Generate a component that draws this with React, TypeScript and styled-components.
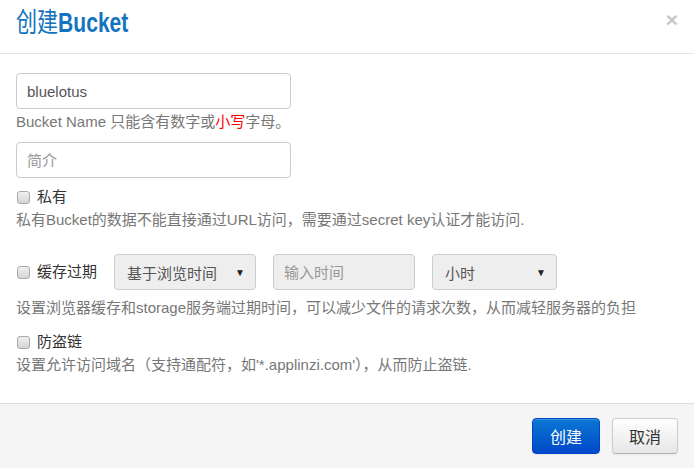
import styled, { createGlobalStyle } from 'styled-components';

const GlobalStyle = createGlobalStyle`
  html, body {
    margin: 0;
    padding: 0;
    background: #fff;
  }
  body {
    font-family: "Liberation Sans", Arial, "Noto Sans CJK SC", sans-serif;
    font-size: 14px;
    color: #333;
  }
`;

const App = () => {
  return (
    <Modal>
      <GlobalStyle />
      <Header>
        <Title>
          创建<strong>Bucket</strong>
        </Title>
        <Close>×</Close>
      </Header>
      <Body>
        <Field>
          <TextInput defaultValue="bluelotus" />
          <Help>
            Bucket Name 只能含有数字或<Red>小写</Red>字母。
          </Help>
        </Field>
        <Field>
          <TextInput placeholder="简介" />
        </Field>
        <Field $top={-1}>
          <CheckLabel>
            <Check type="checkbox" />
            私有
          </CheckLabel>
          <Help>私有Bucket的数据不能直接通过URL访问，需要通过secret key认证才能访问.</Help>
        </Field>
        <Field $top={14} $gap={8}>
          <Row>
            <CheckLabel $width={81}>
              <Check type="checkbox" />
              缓存过期
            </CheckLabel>
            <Select $width={142}>
              基于浏览时间
              <Caret>▼</Caret>
            </Select>
            <TimeInput placeholder="输入时间" disabled />
            <Select $width={125}>
              小时
              <Caret>▼</Caret>
            </Select>
          </Row>
          <Help>设置浏览器缓存和storage服务端过期时间，可以减少文件的请求次数，从而减轻服务器的负担</Help>
        </Field>
        <Field $top={4}>
          <CheckLabel>
            <Check type="checkbox" />
            防盗链
          </CheckLabel>
          <Help>设置允许访问域名（支持通配符，如'*.applinzi.com'），从而防止盗链.</Help>
        </Field>
      </Body>
      <Footer>
        <PrimaryButton>创建</PrimaryButton>
        <Button>取消</Button>
      </Footer>
    </Modal>
  );
};

const Modal = styled.div`
  width: 694px;
  height: 468px;
  display: flex;
  flex-direction: column;
  background: #fff;
  overflow: hidden;
`;

const Header = styled.div`
  height: 53px;
  flex-shrink: 0;
  display: flex;
  align-items: center;
  justify-content: space-between;
  padding: 0 16px;
  border-bottom: 1px solid #e5e5e5;
`;

const Title = styled.h3`
  margin: 0;
  font-size: 27px;
  font-weight: normal;
  color: #1273bf;
  line-height: 30px;
  padding-bottom: 8px;
  transform: scaleX(0.78);
  transform-origin: left center;

  strong {
    font-weight: bold;
  }
`;

const Close = styled.span`
  font-size: 21px;
  font-weight: bold;
  color: #c6c6c6;
  line-height: 20px;
  margin-bottom: 14px;
`;

const Body = styled.div`
  flex: 1;
  padding: 19px 16px 0;
  display: flex;
  flex-direction: column;
  gap: 10px;
`;

const Field = styled.div<{ $top?: number; $gap?: number }>`
  display: flex;
  flex-direction: column;
  gap: ${(p) => p.$gap ?? 3}px;
  margin-top: ${(p) => p.$top ?? 0}px;
`;

const Row = styled.div`
  display: flex;
  align-items: center;
  gap: 17px;
`;

const TextInput = styled.input`
  box-sizing: border-box;
  width: 275px;
  height: 36px;
  padding: 0 10px;
  border: 1px solid #ccc;
  border-radius: 4px;
  font: inherit;
  font-size: 15px;
  color: #555;
  outline: none;

  &::placeholder {
    color: #999;
  }
`;

const TimeInput = styled(TextInput)`
  width: 142px;
  background: #eee;
  cursor: not-allowed;
`;

const Help = styled.div`
  font-size: 15px;
  line-height: 20px;
  color: #777;
  white-space: nowrap;
`;

const Red = styled.span`
  color: #f00;
`;

const CheckLabel = styled.label<{ $width?: number }>`
  display: flex;
  align-items: center;
  gap: 7px;
  font-size: 15px;
  color: #333;
  line-height: 20px;
  width: ${(p) => (p.$width ? `${p.$width}px` : 'auto')};
  white-space: nowrap;
`;

const Check = styled.input`
  appearance: none;
  margin: 0 0 0 1px;
  width: 13px;
  height: 13px;
  border: 1px solid #aaa;
  border-radius: 3px;
  background: linear-gradient(#f0f0f0, #d4d4d4);
  box-sizing: border-box;
`;

const Select = styled.div<{ $width: number }>`
  box-sizing: border-box;
  width: ${(p) => p.$width}px;
  height: 36px;
  display: flex;
  align-items: center;
  justify-content: space-between;
  padding: 0 10px 0 12px;
  border: 1px solid #ccc;
  border-radius: 4px;
  background: #eee;
  font-size: 15px;
  color: #555;
`;

const Caret = styled.span`
  font-size: 10px;
  color: #222;
`;

const Footer = styled.div`
  height: 64px;
  flex-shrink: 0;
  display: flex;
  align-items: center;
  justify-content: flex-end;
  gap: 12px;
  padding: 0 16px;
  background: #f5f5f5;
  border-top: 1px solid #ddd;
`;

const Button = styled.button`
  box-sizing: border-box;
  height: 36px;
  padding: 0 16px;
  font: inherit;
  font-size: 16px;
  color: #333;
  border: 1px solid #ccc;
  border-bottom-color: #b3b3b3;
  border-radius: 4px;
  background: linear-gradient(#fff, #e6e6e6);
  box-shadow: inset 0 1px 0 rgba(255, 255, 255, 0.2), 0 1px 2px rgba(0, 0, 0, 0.05);
`;

const PrimaryButton = styled(Button)`
  padding: 0 17px;
  color: #fff;
  border-color: #04c;
  background: linear-gradient(#0a78d2, #0048c8);
`;

export default App;
